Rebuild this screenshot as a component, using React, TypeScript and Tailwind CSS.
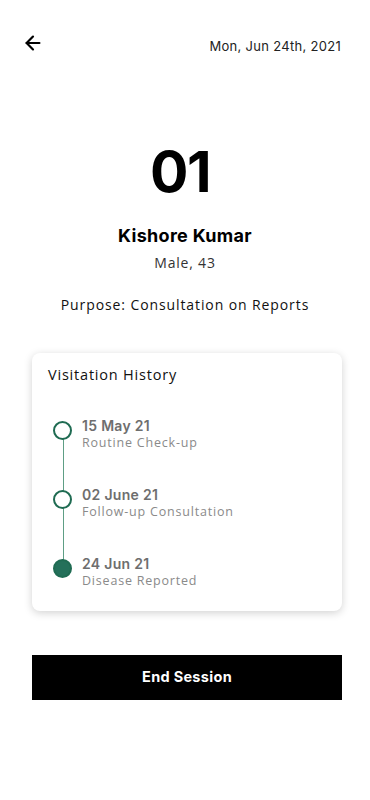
import { ArrowLeft } from 'lucide-react';

interface Visit {
  date: string;
  label: string;
  current?: boolean;
}

const visits: Visit[] = [
  { date: '15 May 21', label: 'Routine Check-up' },
  { date: '02 June 21', label: 'Follow-up Consultation' },
  { date: '24 Jun 21', label: 'Disease Reported', current: true },
];

export default function App() {
  return (
    <div
      className="w-[370px] h-[800px] bg-white text-black"
      style={{ fontFamily: '"Open Sans", "Noto Sans", sans-serif' }}
    >
      {/* Header */}
      <div className="flex items-center justify-between pl-[22px] pr-[29px] pt-[29px]">
        <ArrowLeft size={22} strokeWidth={2.4} className="text-black" />
        <span
          className="text-[13px] tracking-[0.3px] text-[#222] mt-[8px]"
          style={{ fontFamily: 'Inter, sans-serif' }}
        >
          Mon, Jun 24th, 2021
        </span>
      </div>

      {/* Patient */}
      <div className="flex flex-col items-center mt-[87px]">
        <h1
          className="text-[57px] leading-[56px] font-bold tracking-tight -ml-[10px]"
          style={{ fontFamily: 'Inter, sans-serif' }}
        >
          01
        </h1>
        <h2
          className="mt-[24px] text-[18px] leading-[24px] font-bold tracking-[0.3px]"
          style={{ fontFamily: 'Inter, sans-serif' }}
        >
          Kishore Kumar
        </h2>
        <p className="mt-[6px] text-[14px] leading-[18px] tracking-[0.8px] text-[#333]">Male, 43</p>
        <p className="mt-[23px] text-[14px] leading-[20px] tracking-[0.9px] text-[#111]">
          Purpose: Consultation on Reports
        </p>
      </div>

      {/* Visitation history card */}
      <div className="ml-[32px] mr-[28px] mt-[38px] h-[258px] rounded-[8px] bg-white shadow-[0_2px_8px_rgba(0,0,0,0.18)] px-[16px] pt-[12px]">
        <h3 className="text-[14.5px] leading-[20px] tracking-[0.8px] text-[#111]">Visitation History</h3>
        <div className="relative mt-[32px]">
          <div className="absolute left-[14.5px] top-[14px] h-[138px] w-[1.5px] bg-[#5e9e85]" />
          {visits.map((v, i) => (
            <div key={i} className="flex items-start gap-[10px] h-[69px]">
              <div className="pt-[4px] pl-[5px]">
                <div
                  className={`relative z-10 w-[19px] h-[19px] rounded-full border-2 border-[#1f6b52] ${
                    v.current ? 'bg-[#24705a]' : 'bg-white'
                  }`}
                />
              </div>
              <div className="flex flex-col">
                <span
                  className="text-[14px] leading-[18px] font-semibold tracking-[0.3px] text-[#6e6e6e]"
                  style={{ fontFamily: 'Inter, sans-serif' }}
                >
                  {v.date}
                </span>
                <span className="text-[12.5px] leading-[16px] tracking-[0.8px] text-[#8a8a8a]">{v.label}</span>
              </div>
            </div>
          ))}
        </div>
      </div>

      {/* End session */}
      <div className="ml-[32px] mr-[28px] mt-[44px]">
        <button
          className="w-full h-[45px] bg-black text-white text-[14.5px] font-bold tracking-[0.3px]"
          style={{ fontFamily: 'Inter, sans-serif' }}
        >
          End Session
        </button>
      </div>
    </div>
  );
}
